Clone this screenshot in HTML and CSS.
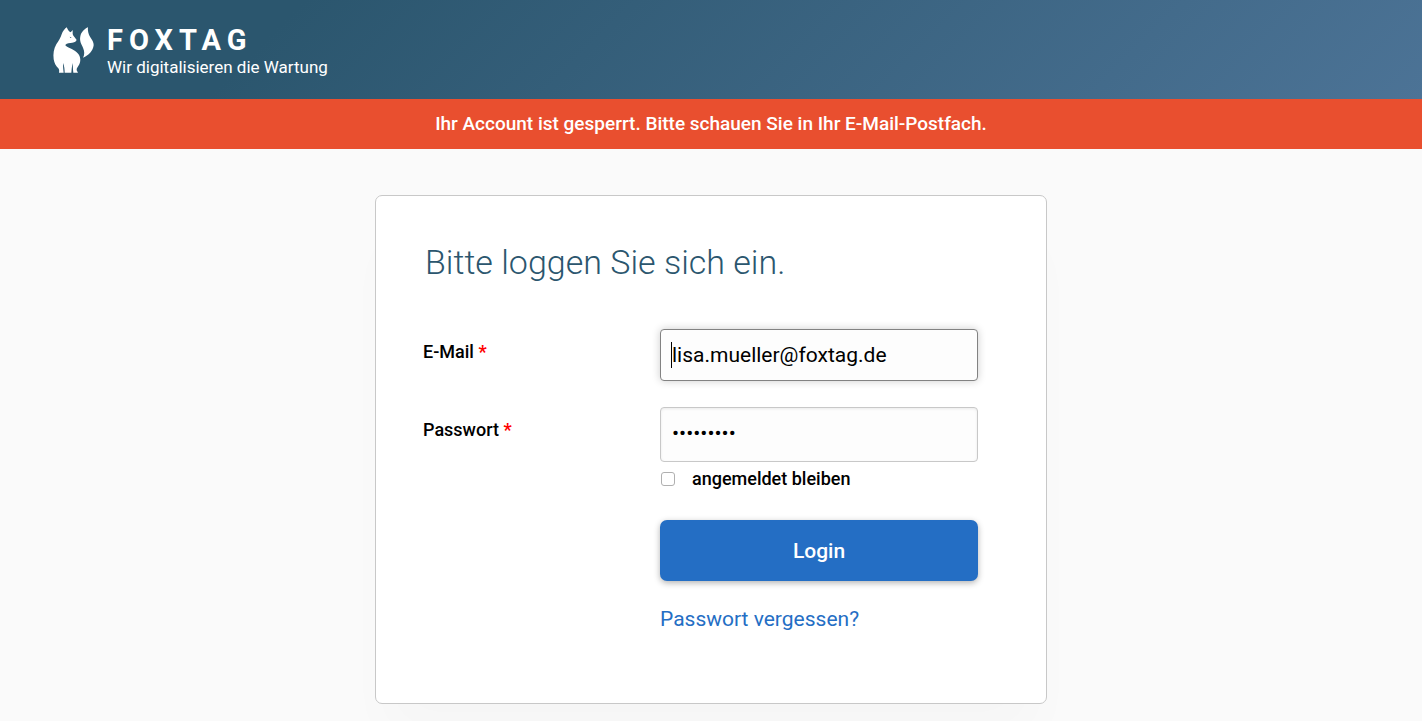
FILE: index.html
```html
<!DOCTYPE html>
<html lang="de">
<head>
<meta charset="utf-8">
<meta name="viewport" content="width=device-width, initial-scale=1">
<title>FOXTAG - Login</title>

<link rel="stylesheet" href="styles.css">

</head>

<body>

<header class="header">
    <svg class="logo" viewBox="39 36 123 138" aria-hidden="true">
        <path fill="#fff" d="M80 37 C82 41 84 45 87 49 L92 52 L98 45 L98 57 C100 64 106 69 110 75 C107 82 99 83 91 84 C83 85 76 87 76 91 C80 97 99 102 110 112 C121 121 124 136 118 148 C114 156 109 160 110 166 L114 173 L100 173 C99 165 98 154 99 144 C95 154 95 165 94 173 L74 173 C74 164 73 153 69 144 C69 155 70 165 71 173 L57 173 C58 168 58 164 55 160 C48 153 43 145 41 133 C39 117 41 102 49 88 C56 77 62 69 65 58 C68 48 74 42 80 37 Z"/>
        <path fill="#2b566e" d="M89 65 L95 68 L91 69 Z"/>
        <path fill="#fff" d="M144 37 C135 41 124 50 121 64 C118 78 124 88 129 98 C134 109 134 119 129 128 C146 122 159 108 161 91 C162 78 151 70 147 59 C144 51 143 44 144 37 Z"/>
    </svg>
    <div class="brand">
        <div class="brand-name">FOXTAG</div>
        <div class="brand-claim">Wir digitalisieren die Wartung</div>
    </div>
</header>

<div class="alert" role="alert">Ihr Account ist gesperrt. Bitte schauen Sie in Ihr E-Mail-Postfach.</div>

<main class="card">
    <h1>Bitte loggen Sie sich ein.</h1>

    <form class="login-form">
        <label class="label" for="email">E-Mail <span class="required">*</span></label>
        <div class="field email-field">
            <input class="text-input active" type="email" id="email" value="lisa.mueller@foxtag.de" required>
        </div>

        <label class="label" for="password">Passwort <span class="required">*</span></label>
        <div class="field">
            <input class="text-input password" type="password" id="password" value="123456789" required>
            <div class="remember">
                <input type="checkbox" id="remember">
                <label for="remember">angemeldet bleiben</label>
            </div>
            <button class="login-button" type="submit">Login</button>
            <a class="forgot" href="#">Passwort vergessen?</a>
        </div>
    </form>
</main>

</body>
</html>
```
FILE: styles.css
```css
* {
    box-sizing: border-box;
}

body {
    background: #fafafa;
    color: #000;
    font-family: Roboto, "Liberation Sans", sans-serif;
    margin: 0;
}

.header {
    display: flex;
    gap: 13px;
    padding: 27px 53px 20px;
    background: linear-gradient(135deg, #2b566e 20%, #4c7396);
    color: white;
}

.logo {
    width: 41px;
    height: 46px;
}

.brand-name {
    font-size: 29px;
    line-height: 26px;
    font-weight: bold;
    letter-spacing: 6px;
}

.brand-claim {
    font-size: 17px;
    line-height: 24px;
    padding-top: 2px;
}

.alert {
    background: #e94f2f;
    color: white;
    font-size: 19px;
    font-weight: 500;
    line-height: 26px;
    padding: 12px 20px;
    text-align: center;
}

.card {
    background: white;
    max-width: 672px;
    margin: 46px auto 17px;
    padding: 44px 68px 70px 47px;
    border: 1px solid #c8c8c8;
    border-radius: 7px;
    box-shadow: 0 40px 50px -10px rgba(0,0,0,0.02);
}

h1 {
    color: #2b566e;
    font-size: 34px;
    font-weight: 300;
    line-height: 44px;
    margin: 0 0 45px;
    padding-left: 2px;
}

.login-form {
    display: grid;
    grid-template-columns: 237px 1fr;
    row-gap: 26px;
}

.label {
    font-size: 18px;
    font-weight: 500;
    line-height: 24px;
    padding-top: 11px;
}

.required {
    color: red;
    font-weight: bold;
}

.field {
    position: relative;
}

.text-input {
    display: block;
    width: 100%;
    height: 52px;
    padding: 0 11px;
    background: #fdfdfd;
    border: 1px solid #c8c8c8;
    border-radius: 4px;
    box-shadow: inset 0 1px 3px rgba(0,0,0,0.08);
    color: #000;
    font-family: inherit;
    font-size: 21px;
    outline: none;
}

.text-input.active {
    border-color: #828282;
    box-shadow: 0 0 8px rgba(0,0,0,0.2);
}

/* text cursor */
.email-field::before {
    content: "";
    position: absolute;
    left: 11px;
    top: 13px;
    width: 1px;
    height: 26px;
    background: #000;
}

.text-input.password {
    height: 55px;
    padding-bottom: 4px;
}

.remember {
    display: flex;
    align-items: center;
    gap: 17px;
    padding: 5px 0;
    font-size: 18px;
    font-weight: 500;
    line-height: 24px;
}

.remember input {
    appearance: none;
    width: 14px;
    height: 14px;
    margin: 0 0 0 1px;
    background: white;
    border: 1px solid #b0b0b0;
    border-radius: 3px;
}

.remember input:checked {
    background: #246ec4;
}

.login-button {
    display: block;
    width: 100%;
    height: 61px;
    margin: 24px 0;
    background: #246ec4;
    color: white;
    border: none;
    border-radius: 7px;
    box-shadow: 0 2px 6px rgba(0,0,0,0.3);
    font-family: inherit;
    font-size: 21px;
    font-weight: 500;
    cursor: pointer;
}

.login-button:hover {
    background: #1f60ac;
}

.forgot {
    color: #246ec4;
    font-size: 21px;
    line-height: 28px;
    text-decoration: none;
}
```
